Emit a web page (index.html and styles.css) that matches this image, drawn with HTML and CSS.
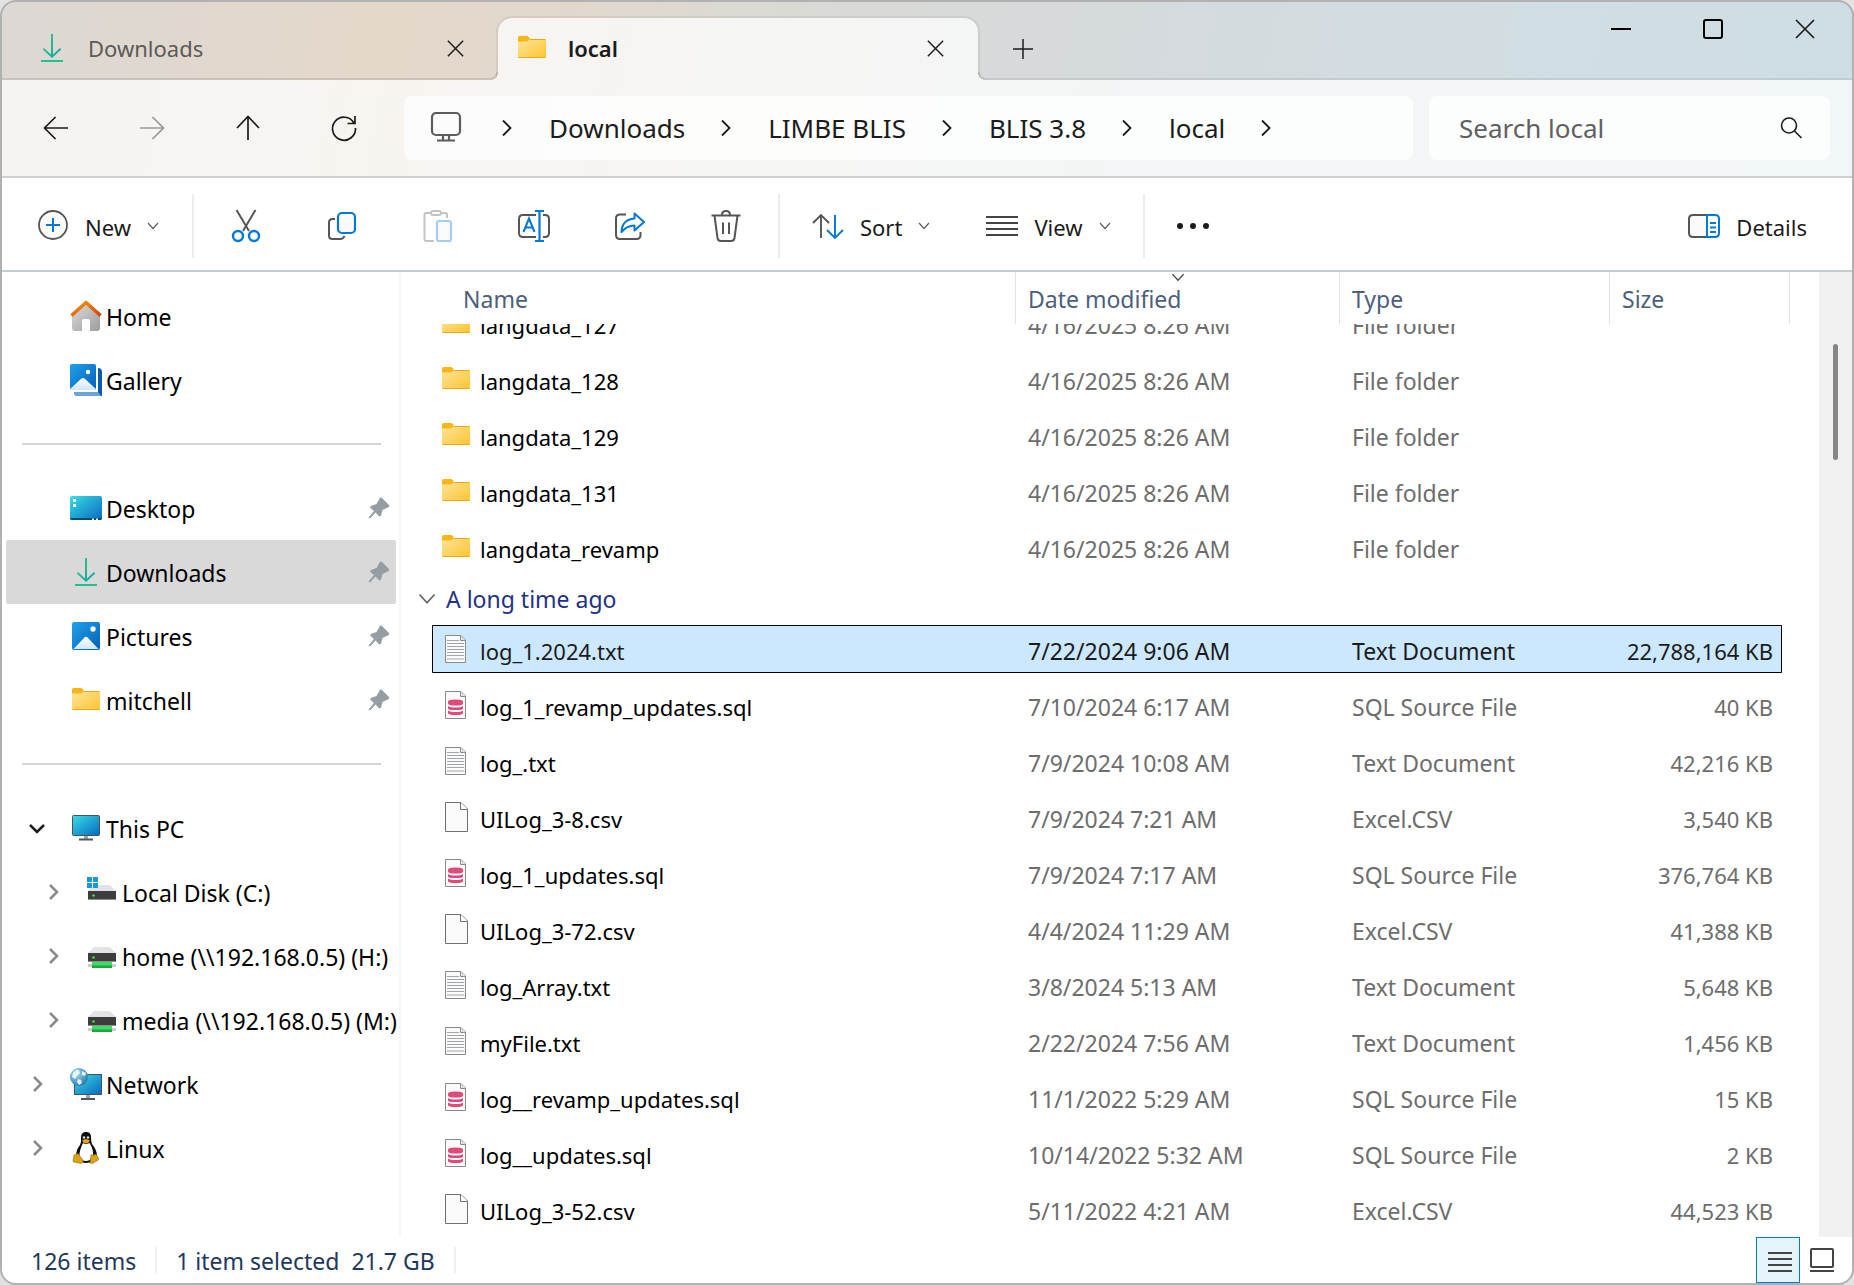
FILE: index.html
```
<!DOCTYPE html>
<html lang="en">
<head>
  <meta charset="UTF-8" />
  <meta name="viewport" content="width=device-width, initial-scale=1.0"/>
  <title>local - File Explorer</title>
  <link rel="stylesheet" href="styles.css">
</head>
<body>

<!-- shared icons -->
<svg class="sprite" aria-hidden="true">
  <defs>
    <linearGradient id="g-folder" x1="0" y1="0" x2="1" y2="1">
      <stop offset="0" stop-color="#ffe49a"/><stop offset="1" stop-color="#fdc52f"/>
    </linearGradient>
    <linearGradient id="g-blue" x1="0" y1="0" x2="1" y2="1">
      <stop offset="0" stop-color="#1fa2ea"/><stop offset="1" stop-color="#0560b8"/>
    </linearGradient>
    <linearGradient id="g-screen" x1="0" y1="0" x2="1" y2="1">
      <stop offset="0" stop-color="#36dfe6"/><stop offset="1" stop-color="#0a68bf"/>
    </linearGradient>
    <linearGradient id="g-green" x1="0" y1="0" x2="1" y2="1">
      <stop offset="0" stop-color="#36c98a"/><stop offset="1" stop-color="#0aa5a2"/>
    </linearGradient>
    <linearGradient id="g-roof" x1="0" y1="0" x2="1" y2="1">
      <stop offset="0" stop-color="#fb9d10"/><stop offset="1" stop-color="#d03f05"/>
    </linearGradient>
    <linearGradient id="g-wall" x1="0" y1="0" x2="1" y2="1">
      <stop offset="0" stop-color="#dedede"/><stop offset="1" stop-color="#9c9c9c"/>
    </linearGradient>
    <linearGradient id="g-snow" x1="0" y1="0" x2="0" y2="1">
      <stop offset="0" stop-color="#ffffff"/><stop offset="1" stop-color="#cfe6fb"/>
    </linearGradient>
    <radialGradient id="g-globe" cx=".35" cy=".3" r=".8">
      <stop offset="0" stop-color="#a8dcf2"/><stop offset="1" stop-color="#1d6fa5"/>
    </radialGradient>
  </defs>
  <symbol id="folder" viewBox="0 0 28 28">
    <path d="M0 3.500Q0 2 1.500 2H9.500L12 4.500V9H0z" fill="#f9b516"/>
    <path d="M0 7.500H9L12 5H27Q28 5 28 6V23Q28 24 27 24H1Q0 24 0 23z" fill="url(#g-folder)"/>
    <path d="M12 5.500H27.500M.5 23.500H27.500" stroke="#e9a820"/>
  </symbol>
  <symbol id="txt" viewBox="0 0 28 28">
    <path d="M3.500 .5H19L23.500 5V27.500H3.500z" fill="#fafafa" stroke="#8a8a8a"/>
    <path d="M18.500 .5V5.500H23.500" fill="#e3e3e3" stroke="#8a8a8a"/>
    <path d="M5 5.500H17M5 8.500H22M5 11.500H22M5 14.500H22M5 17.500H22M5 20.500H22M5 24H22" stroke="#a3a6a9"/>
  </symbol>
  <symbol id="sql" viewBox="0 0 28 28">
    <path d="M3.500 .5H19L23.500 5V27.500H3.500z" fill="#fafafa" stroke="#8a8a8a"/>
    <path d="M18.500 .5V5.500H23.500" fill="#e3e3e3" stroke="#8a8a8a"/>
    <path d="M6 10.500Q6 8.500 13.500 8.500T21 10.500V12.500Q21 14.500 13.500 14.500T6 12.500zM6 15Q8 16.500 13.500 16.500T21 15V17.500Q21 19 13.500 19T6 17.500zM6 19.500Q8 21 13.500 21T21 19.500V22Q21 24 13.500 24T6 22z" fill="#e04a77"/>
  </symbol>
  <symbol id="csv" viewBox="0 0 28 28" overflow="visible">
    <path d="M3.500 -.5H19L25.500 6V28.500H3.500z" fill="#fafafa" stroke="#6f6f6f"/>
    <path d="M18.500 -.5V6.500H25.500" fill="#fff" stroke="#6f6f6f"/>
  </symbol>
  <symbol id="download" viewBox="0 0 28 28" overflow="visible">
    <path d="M13 0h2V20.500L22 14L23.200 15.500L14 24L4.800 15.500L6 14L13 20.500z" fill="url(#g-green)"/>
    <path d="M3 26h22v2H3z" fill="#22c08e"/>
  </symbol>
  <symbol id="pictures" viewBox="0 0 28 28">
    <rect width="28" height="28" rx="2" fill="url(#g-blue)"/>
    <path d="M1.500 27L12.500 15.500Q14 14 15.500 15.500L26.500 27z" fill="url(#g-snow)"/>
    <circle cx="21" cy="7" r="2.700" fill="#fff"/>
  </symbol>
  <symbol id="drive" viewBox="0 0 28 28">
    <path d="M6 7H22L28 13H0z" fill="#e2e3e6"/>
    <path d="M0 13H28V22H0z" fill="#3d3d3d"/>
    <path d="M0 21H28V22H0z" fill="#8f8f8f"/>
    <circle cx="5.500" cy="17.500" r="1.300" fill="#3fe04c"/>
  </symbol>
  <symbol id="netdrive" viewBox="0 0 28 28">
    <path d="M6 5H22L28 11H0z" fill="#e2e3e6"/>
    <path d="M0 11H28V20H0z" fill="#3d3d3d"/>
    <path d="M0 19H28V20H0z" fill="#8f8f8f"/>
    <circle cx="5.500" cy="15.500" r="1.300" fill="#3fe04c"/>
    <path d="M0 22H28V25H0z" fill="#c9ccce"/>
    <path d="M4 20H24V26H4z" fill="#3edc60"/>
    <path d="M4 23.500H24V26H4z" fill="#17a644"/>
  </symbol>
  <symbol id="pin" viewBox="0 0 22 22">
    <path d="M12 .8Q13 .2 14 1L21 8Q21.800 9 20.800 10L14.500 13L13 18.500Q12 20 10.800 19L7.500 15.500L2 21.500L.5 20.500L6 14L2.500 11Q1.500 9.800 3 9L8.500 7z" fill="#949da3"/>
  </symbol>
  <symbol id="chev-right" viewBox="0 0 16 16">
    <path d="M5 1L12 8L5 15" fill="none" stroke="currentColor" stroke-width="2.500"/>
  </symbol>
  <symbol id="crumb-arrow" viewBox="0 0 10 18">
    <path d="M1 1.500L8.500 9L1 16.500" fill="none" stroke="currentColor" stroke-width="1.800"/>
  </symbol>
  <symbol id="chev-down" viewBox="0 0 12 8">
    <path d="M1 1L6 6.500L11 1" fill="none" stroke="currentColor" stroke-width="1.200"/>
  </symbol>
  <symbol id="close" viewBox="0 0 20 20">
    <path d="M1 1L19 19M19 1L1 19" fill="none" stroke="currentColor" stroke-width="1.700"/>
  </symbol>
</svg>

<div class="window">
  <header class="titlebar">
    <div class="tab">
      <svg class="icon-md"><use href="#download"/></svg>
      <span class="tab-title">Downloads</span>
      <button class="tab-close" aria-label="Close tab"><svg><use href="#close"/></svg></button>
    </div>
    <div class="tab tab-active">
      <svg class="icon-md"><use href="#folder"/></svg>
      <span class="tab-title">local</span>
      <button class="tab-close" aria-label="Close tab"><svg><use href="#close"/></svg></button>
    </div>
    <div class="titlebar-rest">
      <button class="tab-new" aria-label="New tab">
        <svg width="20" height="20" viewBox="0 0 20 20"><path d="M10 0V20M0 10H20" stroke="#1b1b1b" stroke-width="1.500"/></svg>
      </button>
      <div class="window-controls">
        <button aria-label="Minimize"><svg width="20" height="20" viewBox="0 0 20 20"><path d="M0 10H20" stroke="#000" stroke-width="2"/></svg></button>
        <button aria-label="Maximize"><svg width="20" height="20" viewBox="0 0 20 20"><rect x="1" y="1" width="18" height="18" rx="2" fill="none" stroke="#000" stroke-width="2"/></svg></button>
        <button aria-label="Close"><svg width="20" height="20"><use href="#close"/></svg></button>
      </div>
    </div>
  </header>

  <div class="navbar">
    <button class="tool" aria-label="Back"><svg width="26" height="26" viewBox="0 0 26 26"><path d="M25 13H2M12.500 2L1.500 13L12.500 24"/></svg></button>
    <button class="tool disabled" aria-label="Forward"><svg width="26" height="26" viewBox="0 0 26 26"><path d="M1 13H24M13.500 2L24.500 13L13.500 24"/></svg></button>
    <button class="tool" aria-label="Up"><svg width="26" height="26" viewBox="0 0 26 26"><path d="M13 25V2M2 13L13 1.500L24 13"/></svg></button>
    <button class="tool" aria-label="Refresh"><svg width="26" height="26" viewBox="0 0 26 26"><path d="M23 8A11.500 11.500 0 1 0 24.500 13M24 1V8.500H16.500"/></svg></button>

    <nav class="address" aria-label="Address">
      <svg class="pc" width="32" height="32" viewBox="0 0 32 32" fill="none" stroke="#5c5c5c" stroke-width="2.200"><rect x="2" y="1" width="28" height="22" rx="4"/><path d="M13 23V28M19 23V28M7 28.500H25"/></svg>
      <svg class="crumb-arrow"><use href="#crumb-arrow"/></svg>
      <a href="#">Downloads</a>
      <svg class="crumb-arrow"><use href="#crumb-arrow"/></svg>
      <a href="#">LIMBE BLIS</a>
      <svg class="crumb-arrow"><use href="#crumb-arrow"/></svg>
      <a href="#">BLIS 3.8</a>
      <svg class="crumb-arrow"><use href="#crumb-arrow"/></svg>
      <a href="#">local</a>
      <svg class="crumb-arrow"><use href="#crumb-arrow"/></svg>
    </nav>

    <label class="search">
      <input type="text" placeholder="Search local" aria-label="Search local">
      <svg width="22" height="22" viewBox="0 0 22 22" fill="none" stroke="#1b1b1b" stroke-width="1.600"><circle cx="9" cy="8.500" r="7.500"/><path d="M14.500 14L21.500 21"/></svg>
    </label>
  </div>

  <div class="toolbar">
    <button class="menu menu-new">
      <svg width="32" height="32" viewBox="0 0 32 32" fill="none"><circle cx="16" cy="15" r="14" fill="#fafafa" stroke="#555" stroke-width="1.800"/><path d="M16 8V22M9 15H23" stroke="#0078d4" stroke-width="2"/></svg>
      <span>New</span>
      <svg class="chev"><use href="#chev-down"/></svg>
    </button>
    <span class="sep"></span>
    <button class="tool" aria-label="Cut">
      <svg width="32" height="32" viewBox="0 0 32 32" fill="none" stroke="#555" stroke-width="2"><path d="M6.500 0L19 21M25.500 0L13 21"/><g stroke="#0078d4" stroke-width="2.400"><circle cx="8" cy="26" r="5"/><circle cx="24" cy="26" r="5"/></g></svg>
    </button>
    <button class="tool" aria-label="Copy">
      <svg width="32" height="32" viewBox="0 0 32 32" fill="none"><path d="M9 9H6.500Q3 9 3 12.500V25.500Q3 29 6.500 29H14Q17.500 29 18.500 26" stroke="#555" stroke-width="2"/><rect x="12" y="3" width="17" height="20" rx="4" fill="#fafafa" stroke="#0078d4" stroke-width="2.200"/></svg>
    </button>
    <button class="tool" aria-label="Paste">
      <svg width="32" height="32" viewBox="0 0 32 32" fill="none"><path d="M8 3H4Q2.500 3 2.500 4.500V29Q2.500 31 4.500 31H12M20 3H23.500Q25 3 25 4.500V8" stroke="#c3c3c3" stroke-width="2"/><rect x="9" y="1" width="10" height="4" rx="2" stroke="#c3c3c3" stroke-width="2"/><rect x="15" y="11" width="14" height="20" rx="2" fill="#fafafa" stroke="#a6cdf0" stroke-width="2.200"/></svg>
    </button>
    <button class="tool" aria-label="Rename">
      <svg width="32" height="32" viewBox="0 0 32 32" fill="none"><path d="M18 5H5Q1 5 1 9V23Q1 27 5 27H18M25 5H27Q31 5 31 9V23Q31 27 27 27H25" stroke="#555" stroke-width="2"/><path d="M5.500 22L11 8.500L16.500 22M7.500 17.500H14.500" stroke="#0078d4" stroke-width="2"/><path d="M21.500 1V31M17 1H26M17 31H26" stroke="#0078d4" stroke-width="2.200"/></svg>
    </button>
    <button class="tool" aria-label="Share">
      <svg width="32" height="32" viewBox="0 0 32 32" fill="none"><path d="M12 4.500H6Q2 4.500 2 8.500V25Q2 29 6 29H22.500Q26.500 29 26.500 25V22" stroke="#555" stroke-width="2"/><path d="M20.500 3.500L30 12L20.500 20.500V15.500Q13 15.500 7.500 22Q8 9.500 20.500 8.500z" stroke="#0078d4" stroke-width="2" stroke-linejoin="round"/></svg>
    </button>
    <button class="tool" aria-label="Delete">
      <svg width="32" height="32" viewBox="0 0 32 32" fill="none" stroke="#555" stroke-width="2"><path d="M1.500 5.500H30.500M12 5Q12 1 16 1T20 5M4.500 5.500L7.500 28Q8 31 11 31H21Q24 31 24.500 28L27.500 5.500M13 12.500V24M19 12.500V24"/></svg>
    </button>
    <span class="sep"></span>
    <button class="menu">
      <svg width="32" height="32" viewBox="0 0 32 32" fill="none" stroke-width="1.900"><path d="M9 28V5.500M1 13L9 5L17 13" stroke="#555"/><path d="M23 5V27.500M15 20L23 28L31 20" stroke="#0078d4"/></svg>
      <span>Sort</span>
      <svg class="chev"><use href="#chev-down"/></svg>
    </button>
    <button class="menu">
      <svg width="32" height="32" viewBox="0 0 32 32" stroke="#444" stroke-width="2"><path d="M0 7H32M0 13H32M0 19H32M0 25H32"/></svg>
      <span>View</span>
      <svg class="chev"><use href="#chev-down"/></svg>
    </button>
    <span class="sep"></span>
    <button class="tool tool-more" aria-label="See more">
      <svg width="32" height="32" viewBox="0 0 32 32" fill="#1b1b1b"><circle cx="3" cy="16" r="3"/><circle cx="16" cy="16" r="3"/><circle cx="29" cy="16" r="3"/></svg>
    </button>
    <button class="menu menu-details">
      <svg width="32" height="32" viewBox="0 0 32 32" fill="none"><path d="M19 5H5Q1 5 1 9V23Q1 27 5 27H19" fill="#fafafa" stroke="#555" stroke-width="2"/><path d="M19 5H27Q31 5 31 9V23Q31 27 27 27H19zM22 13H28M22 17.500H28M22 22H28" stroke="#0078d4" stroke-width="2"/></svg>
      <span>Details</span>
    </button>
  </div>

  <div class="content">
    <nav class="sidebar" aria-label="Navigation pane">
      <a class="side-item" href="#"><span class="arrow"></span>
        <svg class="icon-lg" viewBox="0 0 32 32"><path d="M2 13L16 2L30 13V28Q30 31 27 31H20V21Q20 19 18 19H14Q12 19 12 21V31H5Q2 31 2 28z" fill="url(#g-wall)"/><path d="M1.500 15.500L16 2.500L30.500 15.500" fill="none" stroke="url(#g-roof)" stroke-width="3.600" stroke-linejoin="round"/></svg>
        <span class="side-text">Home</span></a>
      <a class="side-item" href="#"><span class="arrow"></span>
        <svg class="icon-lg" viewBox="0 0 32 32"><path d="M28 4Q32 4 32 8V32H8Q4 32 4 28H28z" fill="#0b5cad"/><path d="M4 28H28L31 32H8Q4 32 4 28z" fill="#6ba3da"/><rect x="0" y="0" width="28" height="28" fill="#fff"/><rect width="26" height="26" rx="2" fill="url(#g-blue)"/><path d="M0 25L11.500 14.500Q13 13.500 14.500 14.500L26 25Q26 26 24 26H2Q0 26 0 25z" fill="url(#g-snow)"/><circle cx="18" cy="8" r="2.200" fill="#fff"/></svg>
        <span class="side-text">Gallery</span></a>
      <hr>
      <a class="side-item" href="#"><span class="arrow"></span>
        <svg class="icon-lg" viewBox="0 0 32 32"><rect y="4" width="32" height="24" rx="2" fill="url(#g-screen)"/><path d="M0 26H32Q32 28 30 28H2Q0 28 0 26z" fill="#084a72"/><path d="M3 7h3v3H3zM3 12h3v3H3zM22 26.500h2v1.500H22zM26 26.500h2v1.500H26z" fill="#fff"/></svg>
        <span class="side-text">Desktop</span><svg class="pin"><use href="#pin"/></svg></a>
      <a class="side-item selected" href="#"><span class="arrow"></span>
        <svg class="icon-lg slot"><use href="#download"/></svg>
        <span class="side-text">Downloads</span><svg class="pin"><use href="#pin"/></svg></a>
      <a class="side-item" href="#"><span class="arrow"></span>
        <svg class="icon-lg slot"><use href="#pictures"/></svg>
        <span class="side-text">Pictures</span><svg class="pin"><use href="#pin"/></svg></a>
      <a class="side-item" href="#"><span class="arrow"></span>
        <svg class="icon-lg slot"><use href="#folder"/></svg>
        <span class="side-text">mitchell</span><svg class="pin"><use href="#pin"/></svg></a>
      <hr>
      <a class="side-item" href="#">
        <svg class="arrow open" viewBox="0 0 16 16"><path d="M1 5L8 12L15 5" fill="none" stroke="currentColor" stroke-width="2.500"/></svg>
        <svg class="icon-lg" viewBox="0 0 32 32"><rect x="2.500" y="3.500" width="27" height="20" rx="1" fill="url(#g-screen)" stroke="#44545f"/><path d="M14 24h4v3h-4z" fill="#a0a4a8"/><path d="M9 26.500h14v2H9z" fill="#50565c"/></svg>
        <span class="side-text">This PC</span></a>
      <a class="side-item child" href="#"><svg class="arrow"><use href="#chev-right"/></svg>
        <svg class="icon-lg" viewBox="0 0 32 32"><use href="#drive" x="2" y="2" width="28" height="28"/><path d="M1 1H12V12H1z" fill="#fff"/><path d="M1 1h5v5H1zM7 1h5v5H7zM1 7h5v5H1zM7 7h5v5H7z" fill="#1a95e0"/></svg>
        <span class="side-text">Local Disk (C:)</span></a>
      <a class="side-item child" href="#"><svg class="arrow"><use href="#chev-right"/></svg>
        <svg class="icon-lg slot"><use href="#netdrive"/></svg>
        <span class="side-text">home (\\192.168.0.5) (H:)</span></a>
      <a class="side-item child" href="#"><svg class="arrow"><use href="#chev-right"/></svg>
        <svg class="icon-lg slot"><use href="#netdrive"/></svg>
        <span class="side-text">media (\\192.168.0.5) (M:)</span></a>
      <a class="side-item" href="#"><svg class="arrow"><use href="#chev-right"/></svg>
        <svg class="icon-lg" viewBox="0 0 32 32"><rect x="4.500" y="6.500" width="27" height="20" fill="url(#g-screen)" stroke="#44545f"/><path d="M16 27h4v3h-4z" fill="#a0a4a8"/><path d="M11 30h14v2H11z" fill="#50565c"/><circle cx="9" cy="9" r="9" fill="url(#g-globe)"/><path d="M3 5Q6 1 9 2L10 5L7 8L5 11L2 9zM12 3L16 5L15 8L12 7zM8 11L11 12L12 15L9 17L7 14z" fill="#e4f3f8"/></svg>
        <span class="side-text">Network</span></a>
      <a class="side-item" href="#"><svg class="arrow"><use href="#chev-right"/></svg>
        <svg class="icon-lg" viewBox="0 0 32 32"><path d="M16 0Q11 0 11 5.500Q11.500 10 10 13Q6 18 6 24Q9 31 16 31Q24 31 27 24Q27 18 22 12Q21 9 21 5Q21 0 16 0z" fill="#0c0c0c"/><path d="M13 11Q16 13 19.500 11Q24 18 23 25Q20 29 16 29Q11 29 9.500 25Q9 19 13 11z" fill="#fff"/><circle cx="14" cy="5.500" r="1.300" fill="#ddd"/><circle cx="18" cy="5.500" r="1.300" fill="#ddd"/><path d="M12 8.500Q16 5.500 20 8.500Q19 11 16 11.500Q13 11 12 8.500z" fill="#e0a516"/><path d="M4 23L8 21.500L13 28Q13.500 31 11 31.500L3.500 30Q2.500 29 3.500 27zM21 22.500Q23 24.500 26 22L29 27Q29 28 25 30Q22 32.500 20 31z" fill="#d9a312" stroke="#7d6018" stroke-width=".5"/></svg>
        <span class="side-text">Linux</span></a>
    </nav>

    <main class="files">
      <table>
        <thead>
          <tr>
            <th>Name</th>
            <th><svg class="sort-mark"><use href="#chev-down"/></svg>Date modified</th>
            <th>Type</th>
            <th>Size</th>
          </tr>
        </thead>
        <tbody>
          <tr><td><svg class="icon-md"><use href="#folder"/></svg>langdata_127</td><td>4/16/2025 8:26 AM</td><td>File folder</td><td></td></tr>
          <tr><td><svg class="icon-md"><use href="#folder"/></svg>langdata_128</td><td>4/16/2025 8:26 AM</td><td>File folder</td><td></td></tr>
          <tr><td><svg class="icon-md"><use href="#folder"/></svg>langdata_129</td><td>4/16/2025 8:26 AM</td><td>File folder</td><td></td></tr>
          <tr><td><svg class="icon-md"><use href="#folder"/></svg>langdata_131</td><td>4/16/2025 8:26 AM</td><td>File folder</td><td></td></tr>
          <tr><td><svg class="icon-md"><use href="#folder"/></svg>langdata_revamp</td><td>4/16/2025 8:26 AM</td><td>File folder</td><td></td></tr>
          <tr class="group"><th colspan="4"><svg><use href="#chev-down"/></svg>A long time ago</th></tr>
          <tr class="selected"><td><svg class="icon-md"><use href="#txt"/></svg>log_1.2024.txt</td><td>7/22/2024 9:06 AM</td><td>Text Document</td><td>22,788,164 KB</td></tr>
          <tr><td><svg class="icon-md"><use href="#sql"/></svg>log_1_revamp_updates.sql</td><td>7/10/2024 6:17 AM</td><td>SQL Source File</td><td>40 KB</td></tr>
          <tr><td><svg class="icon-md"><use href="#txt"/></svg>log_.txt</td><td>7/9/2024 10:08 AM</td><td>Text Document</td><td>42,216 KB</td></tr>
          <tr><td><svg class="icon-md"><use href="#csv"/></svg>UILog_3-8.csv</td><td>7/9/2024 7:21 AM</td><td>Excel.CSV</td><td>3,540 KB</td></tr>
          <tr><td><svg class="icon-md"><use href="#sql"/></svg>log_1_updates.sql</td><td>7/9/2024 7:17 AM</td><td>SQL Source File</td><td>376,764 KB</td></tr>
          <tr><td><svg class="icon-md"><use href="#csv"/></svg>UILog_3-72.csv</td><td>4/4/2024 11:29 AM</td><td>Excel.CSV</td><td>41,388 KB</td></tr>
          <tr><td><svg class="icon-md"><use href="#txt"/></svg>log_Array.txt</td><td>3/8/2024 5:13 AM</td><td>Text Document</td><td>5,648 KB</td></tr>
          <tr><td><svg class="icon-md"><use href="#txt"/></svg>myFile.txt</td><td>2/22/2024 7:56 AM</td><td>Text Document</td><td>1,456 KB</td></tr>
          <tr><td><svg class="icon-md"><use href="#sql"/></svg>log__revamp_updates.sql</td><td>11/1/2022 5:29 AM</td><td>SQL Source File</td><td>15 KB</td></tr>
          <tr><td><svg class="icon-md"><use href="#sql"/></svg>log__updates.sql</td><td>10/14/2022 5:32 AM</td><td>SQL Source File</td><td>2 KB</td></tr>
          <tr><td><svg class="icon-md"><use href="#csv"/></svg>UILog_3-52.csv</td><td>5/11/2022 4:21 AM</td><td>Excel.CSV</td><td>44,523 KB</td></tr>
        </tbody>
      </table>
    </main>

    <div class="scrollbar"><div class="thumb"></div></div>
  </div>

  <footer class="statusbar">
    <span class="status-part">126 items</span>
    <span class="status-part"><span>1 item selected</span><span>21.7 GB</span></span>
    <div class="view-buttons">
      <button class="active" aria-label="Details view"><svg width="24" height="24" viewBox="0 0 24 24" stroke="#444" stroke-width="2"><path d="M2 5H26M2 11H26M2 17H26M2 23H26"/></svg></button>
      <button aria-label="Large icons view"><svg width="24" height="24" viewBox="0 0 24 24" fill="none" stroke="#444" stroke-width="2"><rect x="1" y="1" width="22" height="18" rx="1"/><path d="M0 23H24"/></svg></button>
    </div>
  </footer>
</div>

</body>
</html>
```

FILE: styles.css
```
* {
  box-sizing: border-box;
}

body {
  margin: 0;
  background-color: #e2e2e2;
  font-family: 'Noto Sans', 'Open Sans', sans-serif;
  font-size: 22px;
  color: #000;
}

button {
  border: none;
  padding: 0;
  background: none;
  font: inherit;
  color: #1b1b1b;
  display: flex;
  align-items: center;
  justify-content: center;
}

a {
  color: inherit;
  text-decoration: none;
}

svg {
  flex-shrink: 0;
  overflow: visible;
}

.sprite {
  position: absolute;
  width: 0;
  height: 0;
}

.icon-md {
  width: 28px;
  height: 28px;
}

.icon-lg {
  width: 32px;
  height: 32px;
}

.icon-lg.slot {
  padding: 2px;
}

.window {
  display: flex;
  flex-direction: column;
  min-height: 100vh;
  border: 2px solid #b1b1b1;
  border-radius: 16px;
  overflow: hidden;
  background: linear-gradient(100deg, #dcd8d4 0%, #e4d8ca 18%, #e2d8cc 26%, #dadad5 38%, #d5dadd 55%, #d1dee3 75%, #ccdde5 100%);
}

/* title bar */
.titlebar {
  display: flex;
  height: 78px;
}

.tab {
  display: flex;
  align-items: center;
  width: 494px;
  padding: 14px 30px 0 36px;
  background: linear-gradient(#0000001a, #0000001a) left bottom / calc(100% - 6px) 2px no-repeat;
}

.tab-title {
  flex: 1;
  margin-left: 22px;
  color: #5c5a57;
}

.tab-close svg {
  width: 17px;
  height: 17px;
  margin: 0 2px;
}

.tab-active {
  position: relative;
  width: 484px;
  margin-top: 14px;
  padding: 0 32px 2px 20px;
  border: 2px solid #0000000f;
  border-bottom: none;
  border-radius: 16px 16px 0 0;
  background: rgba(255, 255, 255, .72);
  background-clip: padding-box;
}

.tab-active .tab-title {
  color: #1b1b1b;
  font-weight: 600;
}

/* curved feet where the active tab meets the bar below */
.tab-active::before,
.tab-active::after {
  content: '';
  position: absolute;
  bottom: 0;
  width: 8px;
  height: 8px;
}

.tab-active::before {
  left: -8px;
  background: radial-gradient(circle at 0 0, transparent 6px, #0000001a 6px 8px, rgba(255, 255, 255, .72) 8px);
}

.tab-active::after {
  right: -8px;
  background: radial-gradient(circle at 100% 0, transparent 6px, #0000001a 6px 8px, rgba(255, 255, 255, .72) 8px);
}

.titlebar-rest {
  flex: 1;
  display: flex;
  justify-content: space-between;
  background: linear-gradient(#00000014, #00000014) right bottom / calc(100% - 6px) 2px no-repeat;
}

.tab-new {
  width: 86px;
  height: 78px;
  padding-top: 16px;
}

.window-controls {
  display: flex;
  height: 54px;
  margin-right: 1px;
}

.window-controls button {
  width: 92px;
}

/* navigation */
.navbar {
  display: flex;
  align-items: center;
  height: 98px;
  padding: 0 22px 0 6px;
  background: rgba(255, 255, 255, .72);
  border-bottom: 2px solid #00000026;
}

.tool {
  width: 96px;
  height: 64px;
}

.navbar .tool svg {
  fill: none;
  stroke: #1b1b1b;
  stroke-width: 1.7px;
}

.navbar .disabled {
  opacity: .42;
}

.address,
.search {
  display: flex;
  align-items: center;
  height: 64px;
  border-radius: 8px;
  background: rgba(255, 255, 255, .75);
  font-size: 26px;
  color: #1b1b1b;
}

.address {
  flex: 1;
  margin: 0 16px 0 12px;
  padding-left: 26px;
}

.address .pc {
  margin-right: 4px;
}

.crumb-arrow {
  width: 10px;
  height: 18px;
  margin: 0 37px 0 36px;
}

.search {
  flex: 0 1 401px;
  min-width: 0;
  padding: 0 28px 0 30px;
}

.search input {
  width: 100%;
  min-width: 0;
  padding: 0;
  border: none;
  outline: none;
  background: none;
  font: inherit;
}

.search input::placeholder {
  color: #606060;
  opacity: 1;
}

/* command bar */
.toolbar {
  display: flex;
  align-items: center;
  height: 94px;
  padding-top: 3px;
  background: #fff;
  border-bottom: 2px solid #c5ccd0;
}

.sep {
  width: 2px;
  height: 64px;
  margin: 0 4px;
  background: #ececec;
}

.menu {
  height: 64px;
  padding: 0 28px;
  gap: 16px;
}

.menu span {
  padding-top: 2px;
}

.menu-new {
  padding: 0 29px 0 35px;
}

.menu .chev {
  width: 12px;
  height: 8px;
  color: #5c5c5c;
}

.tool-more {
  width: 88px;
}

.menu-details {
  margin-left: auto;
  padding-right: 45px;
}

/* main area */
.content {
  flex: 1;
  display: flex;
  background: #fff;
}

.sidebar {
  width: 399px;
  padding: 12px 4px 0;
  border-right: 2px solid #f6f6f6;
  font-size: 23px;
}

.side-item {
  display: flex;
  align-items: center;
  height: 64px;
  width: 390px;
  padding: 0 6px 0 23px;
  border-radius: 2px;
}

.side-item.child {
  padding-left: 39px;
}

.side-item.selected {
  background: #d9d9d9;
}

.arrow {
  width: 16px;
  height: 16px;
  margin-right: 25px;
  color: #8a8a8a;
}

.arrow.open {
  color: #1b1b1b;
}

.side-text {
  flex: 1;
  margin-left: 4px;
  padding-top: 2px;
  white-space: nowrap;
}

.pin {
  width: 22px;
  height: 22px;
}

.sidebar hr {
  height: 2px;
  margin: 31px 14px 31px 16px;
  border: none;
  background: #d5d5d5;
}

.files {
  flex: 1;
  min-width: 0;
}

table,
thead,
tbody {
  display: block;
}

thead tr,
tbody tr {
  display: grid;
  grid-template-columns: 1fr 324px 270px 180px;
}

thead tr {
  height: 52px;
  margin-right: 29px;
  border-right: 1px solid #e2e2e2;
}

th {
  position: relative;
  padding: 4px 12px 0;
  border-left: 1px solid #e2e2e2;
  font-size: 23px;
  line-height: 46px;
  text-align: left;
  font-weight: 400;
  color: #4c607a;
}

th:first-child {
  padding-left: 62px;
  border-left: none;
}

.sort-mark {
  position: absolute;
  top: 1px;
  left: 50%;
  width: 14px;
  height: 9px;
  margin-left: -7px;
  color: #444;
}

tbody {
  overflow: hidden;
}

tbody tr {
  grid-template-columns: 1fr 324px 270px 173px;
  height: 48px;
  margin: 0 37px 8px 31px;
}

/* list is scrolled a little way down */
tbody tr:first-child {
  margin-top: -25px;
}

tbody tr:last-child {
  margin-bottom: 4px;
}

td {
  padding: 3px 0 0 13px;
  line-height: 46px;
  white-space: nowrap;
  color: #6d6d6d;
}

td:first-child {
  display: flex;
  align-items: center;
  padding-left: 10px;
  color: #000;
}

td:first-child .icon-md {
  margin: 0 10px 4px 0;
}

td:nth-child(2),
td:nth-child(3) {
  font-size: 23px;
}

td:last-child {
  padding-right: 9px;
  text-align: right;
}

tr.selected {
  background: #cce8ff;
  box-shadow: inset 0 0 0 1px #000;
  border-radius: 1px;
}

tr.selected td {
  color: #1b1b1b;
}

tr.group {
  display: block;
  height: 46px;
  margin: 0 0 0 17px;
}

.group th:first-child {
  display: flex;
  align-items: center;
  padding: 0;
  line-height: 40px;
  color: #1e3287;
}

.group svg {
  width: 18px;
  height: 12px;
  margin-right: 10px;
  color: #666;
}

.scrollbar {
  width: 33px;
  padding: 72px 14px 0;
  background: #f0f0f0;
}

.thumb {
  width: 5px;
  height: 116px;
  border-radius: 3px;
  background: #868686;
}

/* status bar */
.statusbar {
  display: flex;
  align-items: center;
  height: 46px;
  padding-left: 10px;
  background: #fff;
  font-size: 23px;
  color: #1e395b;
}

.status-part {
  display: flex;
  gap: 12px;
  padding: 2px 19px 0;
  border-right: 2px solid #f0f0f0;
  line-height: 24px;
}

.view-buttons {
  display: flex;
  margin-left: auto;
  padding-right: 8px;
}

.view-buttons button {
  width: 44px;
  height: 46px;
}

.view-buttons .active {
  border: 1px solid #0078d4;
  background: #e5f3fb;
}
```
